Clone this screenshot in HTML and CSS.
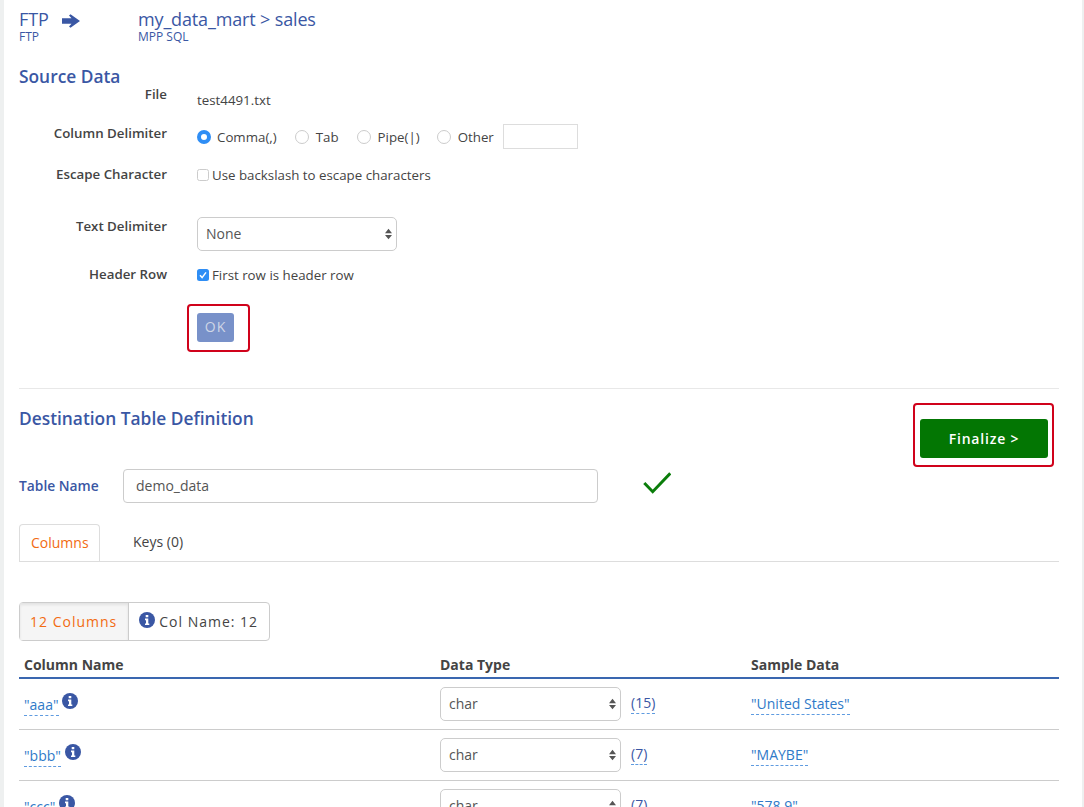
FILE: index.html
```html
<!DOCTYPE html>
<html lang="en">
<head>
    <meta charset="UTF-8">
    <title>Load data</title>
    <meta name="viewport" content="width=device-width, initial-scale=1.0">
    <link rel="stylesheet" href="styles.css">
</head>
<body>
<div class="page">

    <header class="route">
        <div class="route-from">
            <div class="route-name">FTP</div>
            <div class="route-type">FTP</div>
        </div>
        <svg class="route-arrow" width="18" height="14" viewBox="0 0 18 14">
            <path d="M0 4.2H9.5L7 1.6 8.5 0.2 18 7 8.5 13.8 7 12.4 9.5 9.8H0Z" fill="#3a57a4"/>
        </svg>
        <div class="route-to">
            <div class="route-name">my_data_mart &gt; sales</div>
            <div class="route-type">MPP SQL</div>
        </div>
    </header>

    <h2 class="section-title source-title">Source Data</h2>

    <form onsubmit="return false;">
        <div class="field field-file">
            <label class="field-label">File</label>
            <div class="field-value file-name">test4491.txt</div>
        </div>

        <div class="field field-delimiter">
            <label class="field-label">Column Delimiter</label>
            <div class="field-value radios">
                <label class="radio-item"><input type="radio" name="delim" checked> Comma(,)</label>
                <label class="radio-item"><input type="radio" name="delim"> Tab</label>
                <label class="radio-item"><input type="radio" name="delim"> Pipe(|)</label>
                <label class="radio-item"><input type="radio" name="delim"> Other</label>
                <input type="text" class="other-input">
            </div>
        </div>

        <div class="field field-escape">
            <label class="field-label">Escape Character</label>
            <div class="field-value">
                <label class="check-item"><input type="checkbox"> Use backslash to escape characters</label>
            </div>
        </div>

        <div class="field field-text">
            <label class="field-label">Text Delimiter</label>
            <div class="field-value">
                <div class="select-wrap text-select">
                    <select><option>None</option></select>
                    <svg class="select-arrows" width="7" height="12" viewBox="0 0 8 12"><path d="M4 0 8 5H0ZM0 7H8L4 12Z"/></svg>
                </div>
            </div>
        </div>

        <div class="field field-header">
            <label class="field-label">Header Row</label>
            <div class="field-value">
                <label class="check-item">
                    <input type="checkbox" class="check-hidden" checked>
                    <svg class="check-on" width="12" height="12" viewBox="0 0 12 12">
                        <rect width="12" height="12" rx="2.5" fill="#2f8ef5"/>
                        <path d="M3 6.3 5.1 8.6 9 3.4" fill="none" stroke="#fff" stroke-width="1.5"/>
                    </svg>
                    First row is header row
                </label>
            </div>
        </div>

        <div class="ok-row">
            <div class="callout ok-callout">
                <button type="button" class="btn-ok">OK</button>
            </div>
        </div>
    </form>

    <hr class="divider">

    <div class="dest-head">
        <h2 class="section-title">Destination Table Definition</h2>
        <div class="callout finalize-callout">
            <button type="button" class="btn-finalize">Finalize &gt;</button>
        </div>
    </div>

    <div class="table-name">
        <label class="table-name-label">Table Name</label>
        <input type="text" class="table-name-input" value="demo_data">
        <svg class="name-ok" width="28" height="22" viewBox="0 0 28 22">
            <path d="M1.3 11 9.7 19.7 27.3 1.3" fill="none" stroke="#0a7d0a" stroke-width="3"/>
        </svg>
    </div>

    <ul class="tabs">
        <li class="tab tab-active">Columns</li>
        <li class="tab">Keys (0)</li>
    </ul>

    <div class="btn-group">
        <div class="group-item group-active">12 Columns</div>
        <div class="group-item">
            <svg class="info" width="16" height="16" viewBox="0 0 16 16"><circle cx="8" cy="8" r="8" fill="#3a57a4"/><path d="M6.7 3h2.6v2.2H6.7ZM6 6.600h3.300v4.900h1v1.600H6v-1.600h1V8.200H6Z" fill="#fff"/></svg>
            Col Name: 12
        </div>
    </div>

    <table class="columns">
        <colgroup>
            <col class="col-name">
            <col class="col-type">
            <col class="col-sample">
        </colgroup>
        <thead>
            <tr><th>Column Name</th><th>Data Type</th><th>Sample Data</th></tr>
        </thead>
        <tbody>
            <tr>
                <td><a class="dash">"aaa"</a> <svg class="info" width="16" height="16" viewBox="0 0 16 16"><circle cx="8" cy="8" r="8" fill="#3a57a4"/><path d="M6.7 3h2.6v2.2H6.7ZM6 6.600h3.300v4.900h1v1.600H6v-1.600h1V8.200H6Z" fill="#fff"/></svg></td>
                <td>
                    <div class="type-cell">
                        <div class="select-wrap type-select">
                            <select><option>char</option></select>
                            <svg class="select-arrows" width="7" height="12" viewBox="0 0 8 12"><path d="M4 0 8 5H0ZM0 7H8L4 12Z"/></svg>
                        </div>
                        <a class="dash size">(15)</a>
                    </div>
                </td>
                <td><a class="dash">"United States"</a></td>
            </tr>
            <tr>
                <td><a class="dash">"bbb"</a> <svg class="info" width="16" height="16" viewBox="0 0 16 16"><circle cx="8" cy="8" r="8" fill="#3a57a4"/><path d="M6.7 3h2.6v2.2H6.7ZM6 6.600h3.300v4.900h1v1.600H6v-1.600h1V8.200H6Z" fill="#fff"/></svg></td>
                <td>
                    <div class="type-cell">
                        <div class="select-wrap type-select">
                            <select><option>char</option></select>
                            <svg class="select-arrows" width="7" height="12" viewBox="0 0 8 12"><path d="M4 0 8 5H0ZM0 7H8L4 12Z"/></svg>
                        </div>
                        <a class="dash size">(7)</a>
                    </div>
                </td>
                <td><a class="dash">"MAYBE"</a></td>
            </tr>
            <tr>
                <td><a class="dash">"ccc"</a> <svg class="info" width="16" height="16" viewBox="0 0 16 16"><circle cx="8" cy="8" r="8" fill="#3a57a4"/><path d="M6.7 3h2.6v2.2H6.7ZM6 6.600h3.300v4.900h1v1.600H6v-1.600h1V8.200H6Z" fill="#fff"/></svg></td>
                <td>
                    <div class="type-cell">
                        <div class="select-wrap type-select">
                            <select><option>char</option></select>
                            <svg class="select-arrows" width="7" height="12" viewBox="0 0 8 12"><path d="M4 0 8 5H0ZM0 7H8L4 12Z"/></svg>
                        </div>
                        <a class="dash size">(7)</a>
                    </div>
                </td>
                <td><a class="dash">"578.9"</a></td>
            </tr>
        </tbody>
    </table>

</div>
</body>
</html>
```

FILE: styles.css
```css
html, body {
    margin: 0;
    height: 807px;
    overflow: hidden;
}

body {
    font-family: "Open Sans", sans-serif;
    font-size: 14px;
    color: #444;
    background-color: #fff;
    border-left: 4px solid #eef0f0;
    border-right: 2px solid #eef0f0;
}

.page {
    padding: 0 23px 0 15px;
}

/* route header */
.route {
    display: flex;
    height: 50px;
    padding-top: 9px;
    box-sizing: border-box;
    color: #3a57a4;
}

.route-from {
    width: 43px;
}

.route-arrow {
    margin-top: 5px;
    width: 18px;
}

.route-to {
    margin-left: 58px;
}

.route-name {
    font-size: 18px;
    line-height: 21px;
    letter-spacing: -0.15px;
}

.route-type {
    font-size: 12px;
    line-height: 13px;
}

.section-title {
    margin: 0;
    font-size: 17.35px;
    font-weight: 600;
    line-height: 24px;
    color: #3a57a4;
}

.source-title {
    margin-top: 14px;
}

/* source form */
.field {
    display: flex;
}

.field-label {
    width: 148px;
    text-align: right;
    font-size: 13.3px;
    font-weight: 600;
    line-height: 18px;
    color: #444;
    flex: none;
}

.field-value {
    margin-left: 30px;
    font-size: 13.3px;
    line-height: 18px;
}

.field-file {
    margin-top: -3px;
}

.file-name {
    padding-top: 6px;
}

.field-delimiter {
    margin-top: 15px;
}

.radios {
    display: flex;
    align-items: center;
}

.radio-item {
    display: flex;
    align-items: center;
    margin-right: 18px;
}

.radio-item input {
    appearance: none;
    width: 14px;
    height: 14px;
    margin: 0 7px 0 0;
    border: 1px solid #ccc;
    border-radius: 50%;
    background-color: #fff;
}

.radio-item input:checked {
    border: 4.5px solid #2f8ef5;
    margin-right: 6px;
}

.radio-item:nth-child(3) {
    margin-right: 17px;
}

.radio-item:nth-child(4) {
    margin-right: 9px;
}

.other-input {
    width: 75px;
    height: 25px;
    box-sizing: border-box;
    border: 1px solid #ddd;
}

.field-escape {
    margin-top: 16px;
}

.check-item {
    display: flex;
    align-items: center;
    margin-top: 1px;
}

.check-item input {
    appearance: none;
    width: 12px;
    height: 12px;
    margin: 0 3px 0 0;
    box-sizing: border-box;
    border: 1px solid #ccc;
    border-radius: 2.500px;
}

.check-item .check-hidden {
    display: none;
}

.check-on {
    margin-right: 3px;
}

.field-text {
    margin-top: 33px;
}

.select-wrap {
    position: relative;
}

.select-wrap select {
    appearance: none;
    display: block;
    width: 100%;
    height: 34px;
    padding: 0 8px 2px;
    box-sizing: border-box;
    border: 1px solid #ccc;
    border-radius: 5px;
    background-color: #fff;
    font-family: "Open Sans", sans-serif;
    font-size: 14px;
    color: #555;
}

.select-arrows {
    position: absolute;
    top: 11px;
    right: 5px;
    fill: #555;
}

.text-select {
    width: 200px;
}

.field-header {
    margin-top: 14px;
}

.ok-row {
    margin: 20px 0 0 168px;
}

.callout {
    border: 2px solid #d0021b;
    border-radius: 4px;
    box-sizing: border-box;
}

.ok-callout {
    width: 63px;
    height: 48px;
    padding: 7px 8px;
}

.btn-ok {
    display: block;
    width: 37px;
    height: 29px;
    padding: 0 0 2px;
    border: none;
    border-radius: 3px;
    background-color: #7891c9;
    color: #cfd6e6;
    font-family: "Open Sans", sans-serif;
    font-size: 14px;
    letter-spacing: 1px;
}

.divider {
    margin: 36px 0 0;
    border: none;
    border-top: 1px solid #e8e8e8;
}

/* destination */
.dest-head {
    display: flex;
    justify-content: space-between;
    align-items: flex-start;
    margin-top: 14px;
    padding-right: 5px;
    height: 66px;
}

.dest-head .section-title {
    margin-top: 3px;
}

.finalize-callout {
    width: 141px;
    height: 64px;
    padding: 14px 5px;
}

.btn-finalize {
    display: block;
    width: 128px;
    height: 39px;
    border: none;
    border-radius: 3px;
    background-color: #037603;
    color: #fff;
    font-family: "Open Sans", sans-serif;
    font-size: 14px;
    font-weight: 600;
    letter-spacing: 0.8px;
}

.table-name {
    display: flex;
    align-items: center;
    height: 34px;
}

.table-name-label {
    width: 104px;
    margin-top: -2px;
    font-size: 13.8px;
    font-weight: 600;
    color: #3a57a4;
}

.table-name-input {
    width: 475px;
    height: 34px;
    box-sizing: border-box;
    padding: 0 12px 2px;
    border: 1px solid #ccc;
    border-radius: 4px;
    font-family: "Open Sans", sans-serif;
    font-size: 14px;
    color: #555;
}

.name-ok {
    margin: -6px 0 0 45px;
}

/* tabs */
.tabs {
    display: flex;
    list-style: none;
    margin: 21px 0 0;
    padding: 0;
    height: 37px;
    border-bottom: 1px solid #ddd;
}

.tab {
    width: 81px;
    box-sizing: border-box;
    height: 37px;
    padding: 0 0 0 11px;
    line-height: 36px;
    font-size: 14px;
    margin-right: 22px;
}

.tab-active {
    border: 1px solid #ddd;
    border-bottom: none;
    border-radius: 4px 4px 0 0;
    background-color: #fff;
    color: #f26b12;
}

/* count buttons */
.btn-group {
    display: inline-flex;
    margin-top: 40px;
    height: 39px;
    box-sizing: border-box;
    border: 1px solid #ccc;
    border-radius: 4px;
    font-size: 14px;
    letter-spacing: 1px;
    vertical-align: top;
}

.group-item {
    display: flex;
    align-items: center;
    padding: 0 11px 0 10px;
}

.group-active {
    background-color: #f5f5f5;
    border-right: 1px solid #ccc;
    box-shadow: inset 0 2px 3px rgba(0, 0, 0, 0.08);
    color: #f26b12;
}

.group-item .info {
    margin: -4px 4px 0 0;
}

/* column table */
.columns {
    width: 1040px;
    table-layout: fixed;
    border-collapse: collapse;
    margin-top: 10px;
}

.col-name {
    width: 416px;
}

.col-type {
    width: 311px;
}

.columns th {
    height: 26px;
    padding: 0 5px;
    text-align: left;
    font-size: 14px;
    font-weight: 700;
    color: #444;
    border-bottom: 2px solid #3a67b0;
}

.columns td {
    height: 50px;
    padding: 0 5px;
    font-size: 14px;
    border-bottom: 1px solid #ccc;
}

.columns td:nth-child(odd) {
    height: 48px;
    padding-bottom: 2px;
}

.dash {
    padding-bottom: 1px;
    color: #2f7ac8;
    border-bottom: 1px dashed #5f9be0;
}

.columns .info {
    vertical-align: 1px;
}

.type-cell {
    display: flex;
    align-items: center;
}

.type-select {
    width: 181px;
}

.size {
    margin: -2px 0 0 10px;
    color: #3a57a4;
}
```
